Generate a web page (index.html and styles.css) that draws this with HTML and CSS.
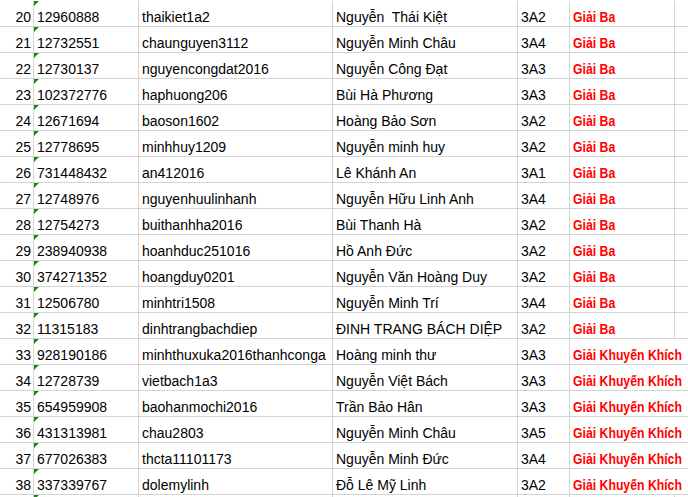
FILE: index.html
```html
<!DOCTYPE html>
<html lang="vi">
<head>
<meta charset="utf-8">
<link rel="stylesheet" href="styles.css">
</head>
<body>
<table class="sheet">
<colgroup>
<col class="c-a"><col class="c-b"><col class="c-c"><col class="c-d"><col class="c-e"><col class="c-f"><col class="c-g">
</colgroup>
<tbody>
<tr><td class="num">20</td><td class="id">12960888</td><td>thaikiet1a2</td><td>Nguyễn&nbsp; Thái Kiệt</td><td>3A2</td><td class="prize"><span class="lbl">Giải Ba</span></td><td></td></tr>
<tr><td class="num">21</td><td class="id">12732551</td><td>chaunguyen3112</td><td>Nguyễn Minh Châu</td><td>3A4</td><td class="prize"><span class="lbl">Giải Ba</span></td><td></td></tr>
<tr><td class="num">22</td><td class="id">12730137</td><td>nguyencongdat2016</td><td>Nguyễn Công Đạt</td><td>3A3</td><td class="prize"><span class="lbl">Giải Ba</span></td><td></td></tr>
<tr><td class="num">23</td><td class="id">102372776</td><td>haphuong206</td><td>Bùi Hà Phương</td><td>3A3</td><td class="prize"><span class="lbl">Giải Ba</span></td><td></td></tr>
<tr><td class="num">24</td><td class="id">12671694</td><td>baoson1602</td><td>Hoàng Bảo Sơn</td><td>3A2</td><td class="prize"><span class="lbl">Giải Ba</span></td><td></td></tr>
<tr><td class="num">25</td><td class="id">12778695</td><td>minhhuy1209</td><td>Nguyễn minh huy</td><td>3A2</td><td class="prize"><span class="lbl">Giải Ba</span></td><td></td></tr>
<tr><td class="num">26</td><td class="id">731448432</td><td>an412016</td><td>Lê Khánh An</td><td>3A1</td><td class="prize"><span class="lbl">Giải Ba</span></td><td></td></tr>
<tr><td class="num">27</td><td class="id">12748976</td><td>nguyenhuulinhanh</td><td>Nguyễn Hữu Linh Anh</td><td>3A4</td><td class="prize"><span class="lbl">Giải Ba</span></td><td></td></tr>
<tr><td class="num">28</td><td class="id">12754273</td><td>buithanhha2016</td><td>Bùi Thanh Hà</td><td>3A2</td><td class="prize"><span class="lbl">Giải Ba</span></td><td></td></tr>
<tr><td class="num">29</td><td class="id">238940938</td><td>hoanhduc251016</td><td>Hồ Anh Đức</td><td>3A2</td><td class="prize"><span class="lbl">Giải Ba</span></td><td></td></tr>
<tr><td class="num">30</td><td class="id">374271352</td><td>hoangduy0201</td><td>Nguyễn Văn Hoàng Duy</td><td>3A2</td><td class="prize"><span class="lbl">Giải Ba</span></td><td></td></tr>
<tr><td class="num">31</td><td class="id">12506780</td><td>minhtri1508</td><td>Nguyễn Minh Trí</td><td>3A4</td><td class="prize"><span class="lbl">Giải Ba</span></td><td></td></tr>
<tr><td class="num">32</td><td class="id">11315183</td><td>dinhtrangbachdiep</td><td>ĐINH TRANG BÁCH DIỆP</td><td>3A2</td><td class="prize"><span class="lbl">Giải Ba</span></td><td></td></tr>
<tr><td class="num">33</td><td class="id">928190186</td><td>minhthuxuka2016thanhconga</td><td>Hoàng minh thư</td><td>3A3</td><td class="prize spill"><span class="lbl">Giải Khuyến Khích</span></td><td></td></tr>
<tr><td class="num">34</td><td class="id">12728739</td><td>vietbach1a3</td><td>Nguyễn Việt Bách</td><td>3A3</td><td class="prize spill"><span class="lbl">Giải Khuyến Khích</span></td><td></td></tr>
<tr><td class="num">35</td><td class="id">654959908</td><td>baohanmochi2016</td><td>Trần Bảo Hân</td><td>3A3</td><td class="prize spill"><span class="lbl">Giải Khuyến Khích</span></td><td></td></tr>
<tr><td class="num">36</td><td class="id">431313981</td><td>chau2803</td><td>Nguyễn Minh Châu</td><td>3A5</td><td class="prize spill"><span class="lbl">Giải Khuyến Khích</span></td><td></td></tr>
<tr><td class="num">37</td><td class="id">677026383</td><td>thcta11101173</td><td>Nguyễn Minh Đức</td><td>3A4</td><td class="prize spill"><span class="lbl">Giải Khuyến Khích</span></td><td></td></tr>
<tr><td class="num">38</td><td class="id">337339767</td><td>dolemylinh</td><td>Đỗ Lê Mỹ Linh</td><td>3A2</td><td class="prize spill"><span class="lbl">Giải Khuyến Khích</span></td><td></td></tr>
<tr><td class="num"></td><td class="id"></td><td></td><td></td><td></td><td class="prize"></td><td></td></tr>
</tbody>
</table>
</body>
</html>
```
FILE: styles.css
```css
html, body {
  margin: 0;
  padding: 0;
  background: #fff;
  overflow: hidden;
}
.sheet {
  margin-top: 1px;
  border-collapse: separate;
  border-spacing: 0;
  table-layout: fixed;
  width: 720px;
  font-family: "Liberation Sans", Arial, sans-serif;
  font-size: 14px;
  color: #000;
}
.c-a { width: 34px; }
.c-b { width: 105px; }
.c-c { width: 194px; }
.c-d { width: 185px; }
.c-e { width: 52px; }
.c-f { width: 105px; }
.c-g { width: 45px; }
.sheet td {
  box-sizing: border-box;
  height: 26px;
  padding: 0 2px 1px 3px;
  vertical-align: bottom;
  line-height: 16px;
  white-space: nowrap;
  overflow: hidden;
  border-right: 1px solid #d4d4d4;
  border-bottom: 1px solid #d4d4d4;
}
.sheet td.num {
  text-align: right;
  padding-right: 2px;
}
.sheet td.id {
  position: relative;
}
.sheet td.id::before {
  content: "";
  position: absolute;
  left: 0;
  top: 0;
  border-top: 5px solid #1a8a1a;
  border-right: 5px solid transparent;
}
.sheet td.prize {
  color: #ff0000;
  font-weight: bold;
  font-size: 14px;
}
.lbl {
  display: inline-block;
  transform: scaleX(0.875);
  transform-origin: left center;
}
.sheet td.spill {
  overflow: visible;
  border-right-color: transparent;
}
```
